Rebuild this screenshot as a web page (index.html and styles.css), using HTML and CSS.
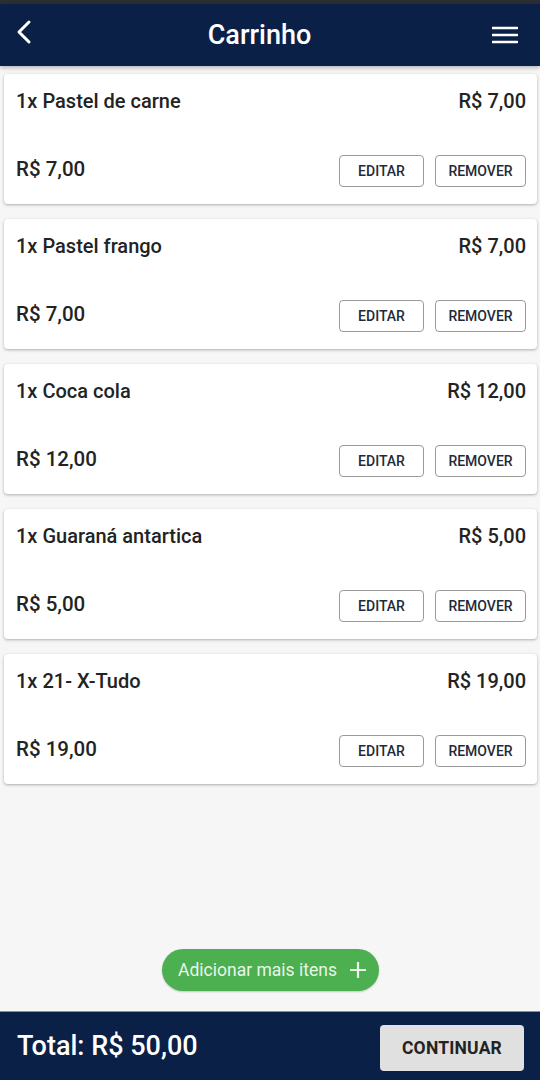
FILE: index.html
```html
<!DOCTYPE html>
<html>
<head>
    <title>Carrinho</title>
    <link rel="stylesheet" href="styles.css">
</head>
<body>

<div class="status-strip"></div>

<header class="topbar">
    <button class="icon-btn" aria-label="Voltar">
        <svg width="18" height="26" viewBox="0 0 18 26"><path d="M14 3 L4 13 L14 23" fill="none" stroke="#fff" stroke-width="3" stroke-linecap="round" stroke-linejoin="round"/></svg>
    </button>
    <h1>Carrinho</h1>
    <button class="icon-btn" aria-label="Menu">
        <svg width="26" height="18" viewBox="0 0 26 18"><path d="M1 2 H25 M1 9 H25 M1 16 H25" stroke="#fff" stroke-width="2.6" stroke-linecap="round"/></svg>
    </button>
</header>

<main class="cart">
    <div class="item">
        <div class="item-top"><span class="name">1x Pastel de carne</span><span class="price">R$ 7,00</span></div>
        <div class="item-bottom"><span class="subtotal">R$ 7,00</span><div class="actions"><button class="outline">EDITAR</button><button class="outline">REMOVER</button></div></div>
    </div>
    <div class="item">
        <div class="item-top"><span class="name">1x Pastel frango</span><span class="price">R$ 7,00</span></div>
        <div class="item-bottom"><span class="subtotal">R$ 7,00</span><div class="actions"><button class="outline">EDITAR</button><button class="outline">REMOVER</button></div></div>
    </div>
    <div class="item">
        <div class="item-top"><span class="name">1x Coca cola</span><span class="price">R$ 12,00</span></div>
        <div class="item-bottom"><span class="subtotal">R$ 12,00</span><div class="actions"><button class="outline">EDITAR</button><button class="outline">REMOVER</button></div></div>
    </div>
    <div class="item">
        <div class="item-top"><span class="name">1x Guaraná antartica</span><span class="price">R$ 5,00</span></div>
        <div class="item-bottom"><span class="subtotal">R$ 5,00</span><div class="actions"><button class="outline">EDITAR</button><button class="outline">REMOVER</button></div></div>
    </div>
    <div class="item">
        <div class="item-top"><span class="name">1x 21- X-Tudo</span><span class="price">R$ 19,00</span></div>
        <div class="item-bottom"><span class="subtotal">R$ 19,00</span><div class="actions"><button class="outline">EDITAR</button><button class="outline">REMOVER</button></div></div>
    </div>
</main>

<div class="add-row">
    <button class="add-btn">Adicionar mais itens
        <svg width="18" height="18" viewBox="0 0 18 18"><path d="M9 1 V17 M1 9 H17" stroke="#e8f5e9" stroke-width="2.2"/></svg>
    </button>
</div>

<footer class="bottombar">
    <span class="total">Total: R$ 50,00</span>
    <button class="continue">CONTINUAR</button>
</footer>

</body>
</html>
```

FILE: styles.css
```css
* {
    box-sizing: border-box;
}

body {
    margin: 0;
    height: 1080px;
    display: flex;
    flex-direction: column;
    font-family: Roboto, "Liberation Sans", sans-serif;
    background-color: #f6f6f6;
    color: #232323;
}

button {
    font-family: inherit;
    cursor: pointer;
}

.status-strip {
    height: 4px;
    background-color: #2b2f33;
}

.topbar {
    height: 62px;
    background-color: #0b2047;
    display: flex;
    align-items: center;
    justify-content: space-between;
    padding: 0 22px 0 15px;
    box-shadow: 0 2px 4px rgba(0, 0, 0, 0.25);
}

.topbar h1 {
    margin: 0 0 0 -6px;
    font-size: 27px;
    font-weight: 500;
    color: #fff;
}

.icon-btn {
    background: none;
    border: none;
    padding: 0;
    display: flex;
}

.icon-btn:first-child {
    margin-top: -6px;
}

.cart {
    flex: 1;
    padding: 8px 3px 0 4px;
    display: flex;
    flex-direction: column;
    gap: 15px;
}

.item {
    height: 130px;
    background-color: #fff;
    border-radius: 4px;
    padding: 14px 11px 17px 12px;
    display: flex;
    flex-direction: column;
    justify-content: space-between;
    box-shadow: 0 1px 3px rgba(0, 0, 0, 0.3);
}

.item-top,
.item-bottom {
    display: flex;
    justify-content: space-between;
    align-items: center;
}

.name,
.price {
    font-size: 20px;
    font-weight: 500;
    line-height: 26px;
}

.subtotal {
    font-size: 20.5px;
    font-weight: 500;
    margin-top: -5px;
}

.actions {
    display: flex;
    gap: 11px;
}

.outline {
    height: 32px;
    background-color: #fff;
    border: 1px solid #9a9a9a;
    border-radius: 4px;
    font-size: 14px;
    font-weight: 500;
    color: #1e2b3a;
    padding: 0;
}

.outline:first-child {
    width: 85px;
}

.outline:last-child {
    width: 91px;
}

.add-row {
    display: flex;
    justify-content: center;
    padding-bottom: 20px;
}

.add-btn {
    height: 42px;
    padding: 0 12px 0 16px;
    margin-left: 1px;
    background-color: #4caf50;
    border: none;
    border-radius: 21px;
    color: #e8f5e9;
    font-size: 17.5px;
    display: flex;
    align-items: center;
    gap: 12px;
    box-shadow: 0 1px 2px rgba(0, 0, 0, 0.2);
}

.bottombar {
    height: 69px;
    background-color: #0b2047;
    display: flex;
    align-items: center;
    justify-content: space-between;
    padding: 0 16px 0 17px;
    border-top: 1px solid #8090a8;
}

.total {
    font-size: 27px;
    font-weight: 500;
    color: #fff;
}

.continue {
    width: 144px;
    height: 46px;
    margin-top: 4px;
    background-color: #e0e0e0;
    border: none;
    border-radius: 4px;
    font-size: 17.5px;
    font-weight: 700;
    color: #232323;
    letter-spacing: 0.2px;
}
```
